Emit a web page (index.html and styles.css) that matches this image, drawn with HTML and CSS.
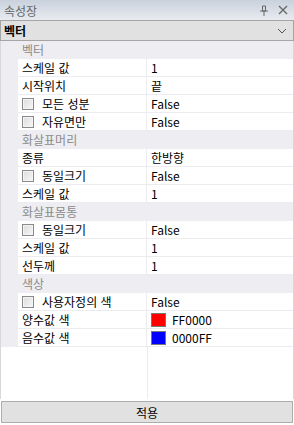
FILE: index.html
```html
<!DOCTYPE html>
<html lang="ko">
<head>
    <meta charset="UTF-8">
    <title>속성장</title>
    <link rel="stylesheet" href="styles.css">
</head>
<body>
    <div class="panel">
        <div class="titlebar">
            <span class="title">속성장</span>
            <span class="tools">
                <svg width="10" height="11" viewBox="0 0 10 11"><path d="M3.5 1h3v5h-3z M1 6h8 M5 6v5" fill="none" stroke="#666" stroke-width="1"/></svg>
                <svg width="10" height="10" viewBox="0 0 10 10"><path d="M1 1l8 8M9 1l-8 8" stroke="#666" stroke-width="1.3"/></svg>
            </span>
        </div>
        <div class="combo">
            <span>벡터</span>
            <svg width="10" height="6" viewBox="0 0 10 6"><path d="M1 1l4 4 4-4" fill="none" stroke="#555" stroke-width="1"/></svg>
        </div>

        <div class="grid">
            <div class="cat">벡터</div>
            <div class="row"><div class="name">스케일 값</div><div class="val">1</div></div>
            <div class="row"><div class="name">시작위치</div><div class="val">끝</div></div>
            <div class="row"><div class="name"><span class="chk"></span>모든 성분</div><div class="val">False</div></div>
            <div class="row"><div class="name"><span class="chk"></span>자유면만</div><div class="val">False</div></div>

            <div class="cat">화살표머리</div>
            <div class="row"><div class="name">종류</div><div class="val">한방향</div></div>
            <div class="row"><div class="name"><span class="chk"></span>동일크기</div><div class="val">False</div></div>
            <div class="row"><div class="name">스케일 값</div><div class="val">1</div></div>

            <div class="cat">화살표몸통</div>
            <div class="row"><div class="name"><span class="chk"></span>동일크기</div><div class="val">False</div></div>
            <div class="row"><div class="name">스케일 값</div><div class="val">1</div></div>
            <div class="row"><div class="name">선두께</div><div class="val">1</div></div>

            <div class="cat">색상</div>
            <div class="row"><div class="name"><span class="chk"></span>사용자정의 색</div><div class="val">False</div></div>
            <div class="row"><div class="name">양수값 색</div><div class="val"><span class="swatch red"></span>FF0000</div></div>
            <div class="row"><div class="name">음수값 색</div><div class="val"><span class="swatch blue"></span>0000FF</div></div>
            <div class="filler"><div class="fill-left"></div><div class="fill-right"></div></div>
        </div>

        <div class="apply">적용</div>
    </div>
</body>
</html>
```

FILE: styles.css
```css
body {
    margin: 0;
    padding: 0;
    background: #ffffff;
    font-family: "Noto Sans CJK KR", "Liberation Sans", sans-serif;
    font-size: 12px;
    color: #000;
}
.panel {
    width: 294px;
    height: 425px;
    display: flex;
    flex-direction: column;
    box-sizing: border-box;
}
.titlebar {
    height: 20px;
    display: flex;
    align-items: center;
    justify-content: space-between;
    padding: 0 4px;
    background: linear-gradient(#c9d1dd, #e8ebf0);
    color: #666;
    flex-shrink: 0;
}
.tools {
    display: flex;
    gap: 9px;
    align-items: center;
    padding-right: 2px;
}
.combo {
    height: 21px;
    box-sizing: border-box;
    border: 1px solid #a5a5a5;
    background: #e1e1e1;
    display: flex;
    align-items: center;
    justify-content: space-between;
    padding: 0 6px 0 3px;
    flex-shrink: 0;
}
.combo span {
    font-weight: 600;
}
.grid {
    flex: 1;
    display: flex;
    flex-direction: column;
    border-left: 1px solid #d8d8d8;
    border-right: 1px solid #d8d8d8;
}
.cat {
    height: 18px;
    line-height: 18px;
    padding-left: 21px;
    background: #eeeef2;
    color: #8a8a8a;
    flex-shrink: 0;
}
.row {
    height: 18px;
    display: flex;
    background: #eeeef2;
    padding-left: 17px;
    flex-shrink: 0;
}
.name, .val {
    display: flex;
    align-items: center;
    background: #fff;
    border-bottom: 1px solid #ececf0;
    box-sizing: border-box;
    height: 18px;
}
.name {
    width: 129px;
    padding-left: 4px;
    border-right: 1px solid #ececf0;
}
.val {
    flex: 1;
    padding-left: 4px;
}
.chk {
    width: 10px;
    height: 10px;
    border: 1px solid #8a8a8a;
    background: linear-gradient(135deg, #dcdcdc, #f7f7f7);
    margin-right: 8px;
    flex-shrink: 0;
    box-shadow: inset 0 0 0 1px #f4f4f4;
}
.swatch {
    width: 13px;
    height: 12px;
    border: 1px solid #777;
    margin-right: 6px;
}
.swatch.red {
    background: #ff0000;
}
.swatch.blue {
    background: #0000ff;
}
.filler {
    flex: 1;
    display: flex;
}
.fill-left {
    width: 146px;
    border-right: 1px solid #ececf0;
}
.fill-right {
    flex: 1;
}
.apply {
    height: 22px;
    margin: 2px 1px 2px 1px;
    box-sizing: border-box;
    border: 1px solid #adadad;
    background: #e1e1e1;
    display: flex;
    align-items: center;
    justify-content: center;
    flex-shrink: 0;
}
```
